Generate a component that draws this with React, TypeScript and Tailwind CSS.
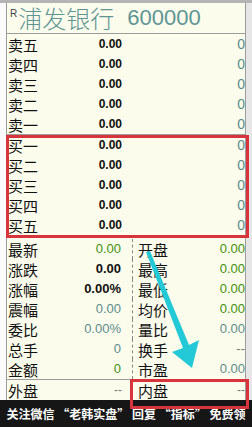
const sell = ["卖五", "卖四", "卖三", "卖二", "卖一"];
const buy = ["买一", "买二", "买三", "买四", "买五"];

type Tone = "green" | "bold" | "teal" | "dash";

const toneClass: Record<Tone, string> = {
  green: "text-[#3f8f0c]",
  bold: "font-bold text-[#111]",
  teal: "text-[#5a8c8c]",
  dash: "text-[#777]"
};

const stats: [string, string, Tone, string, string, Tone][] = [
  ["最新", "0.00", "green", "开盘", "0.00", "green"],
  ["涨跌", "0.00", "bold", "最高", "0.00", "green"],
  ["涨幅", "0.00%", "bold", "最低", "0.00", "green"],
  ["震幅", "0.00", "teal", "均价", "0.00", "green"],
  ["委比", "0.00%", "teal", "量比", "0.00", "teal"],
  ["总手", "0", "teal", "换手", "--", "dash"],
  ["金额", "0", "green", "市盈", "0.00", "teal"]
];

const cjk = "font-['Noto_Sans_CJK_SC',sans-serif]";
const num = "font-['Liberation_Sans',Arial,sans-serif]";
const label = `${cjk} shrink-0 whitespace-nowrap text-[15px] leading-none text-[#111]`;

function QuoteRow({ name }: { name: string }) {
  return (
    <div className="flex h-[20px] items-center">
      <span className={`${label} pl-[1px]`}>{name}</span>
      <span className={`${num} w-[84px] shrink-0 text-right text-[12px] font-bold text-[#111]`}>0.00</span>
      <span className={`${num} flex-1 text-right text-[14px] text-[#5a8c8c]`}>0</span>
    </div>
  );
}

export default function App() {
  return (
    <div className="relative flex h-[427px] w-[252px] flex-col overflow-hidden bg-white">
      <div className="h-[3px] bg-[#b4b4b4]" />
      <div className="flex flex-1">
        <div className="w-[6px] bg-[#fafafa]" />
        <div className="flex w-[240px] flex-col border-x border-[#9c9c9c] bg-[#fcfcec]">
          <div className="flex h-[31px] items-center border-b border-[#9c9c9c] pl-[3px]">
            <span className={`${num} mb-[10px] text-[10px] text-[#444]`}>R</span>
            <span className={`${cjk} ml-[1px] whitespace-nowrap text-[24px] font-light leading-none text-[#5f9595]`}>浦发银行</span>
            <span className={`${num} ml-[13px] text-[22px] leading-none text-[#5f9595]`}>600000</span>
          </div>

          <div className="flex flex-col border-b border-[#9c9c9c]">
            {sell.map((s) => (
              <QuoteRow key={s} name={s} />
            ))}
          </div>
          <div className="flex flex-col border-b border-[#9c9c9c] pb-[2px]">
            {buy.map((s) => (
              <QuoteRow key={s} name={s} />
            ))}
          </div>

          <div className="flex flex-col border-b border-[#9c9c9c] pt-[1px]">
            {stats.map(([l1, v1, t1, l2, v2, t2]) => (
              <div key={l1} className="flex h-[20px] items-center">
                <div className="flex w-[126px] items-center border-r border-dashed border-[#888] pr-[11px]">
                  <span className={`${label} pl-[1px]`}>{l1}</span>
                  <span className={`${num} flex-1 text-right text-[13px] ${toneClass[t1]}`}>{v1}</span>
                </div>
                <div className="flex flex-1 items-center pl-[5px]">
                  <span className={label}>{l2}</span>
                  <span className={`${num} flex-1 text-right text-[13px] ${toneClass[t2]}`}>{v2}</span>
                </div>
              </div>
            ))}
          </div>

          <div className="flex h-[20px] items-center">
            <div className="flex w-[126px] items-center pr-[11px]">
              <span className={`${label} pl-[1px]`}>外盘</span>
              <span className={`${num} flex-1 text-right text-[12px] text-[#777]`}>--</span>
            </div>
            <div className="flex flex-1 items-center pl-[5px]">
              <span className={label}>内盘</span>
              <span className={`${num} flex-1 text-right text-[12px] text-[#777]`}>--</span>
            </div>
          </div>
        </div>
        <div className="flex-1 bg-[#e6e6e6]" />
      </div>

      <div
        className={`${cjk} flex h-[27px] items-center justify-center whitespace-nowrap bg-[#161616] text-[12px] font-bold text-white`}
      >
        关注微信 “老韩实盘” 回复 “指标” 免费领
      </div>

      {/* annotation overlays */}
      <div className="pointer-events-none absolute left-[6px] top-[135px] h-[103px] w-[243px] border-[3px] border-[#d8343c]" />
      <div className="pointer-events-none absolute left-[130px] top-[379px] h-[30px] w-[119px] border-[3px] border-[#d8343c]" />
      <svg className="pointer-events-none absolute left-0 top-0" width="252" height="427" viewBox="0 0 252 427">
        <polygon points="146,252 150,251 189,345 199,340 192,368 172,352 183,348" fill="#23c9d6" />
      </svg>
    </div>
  );
}
